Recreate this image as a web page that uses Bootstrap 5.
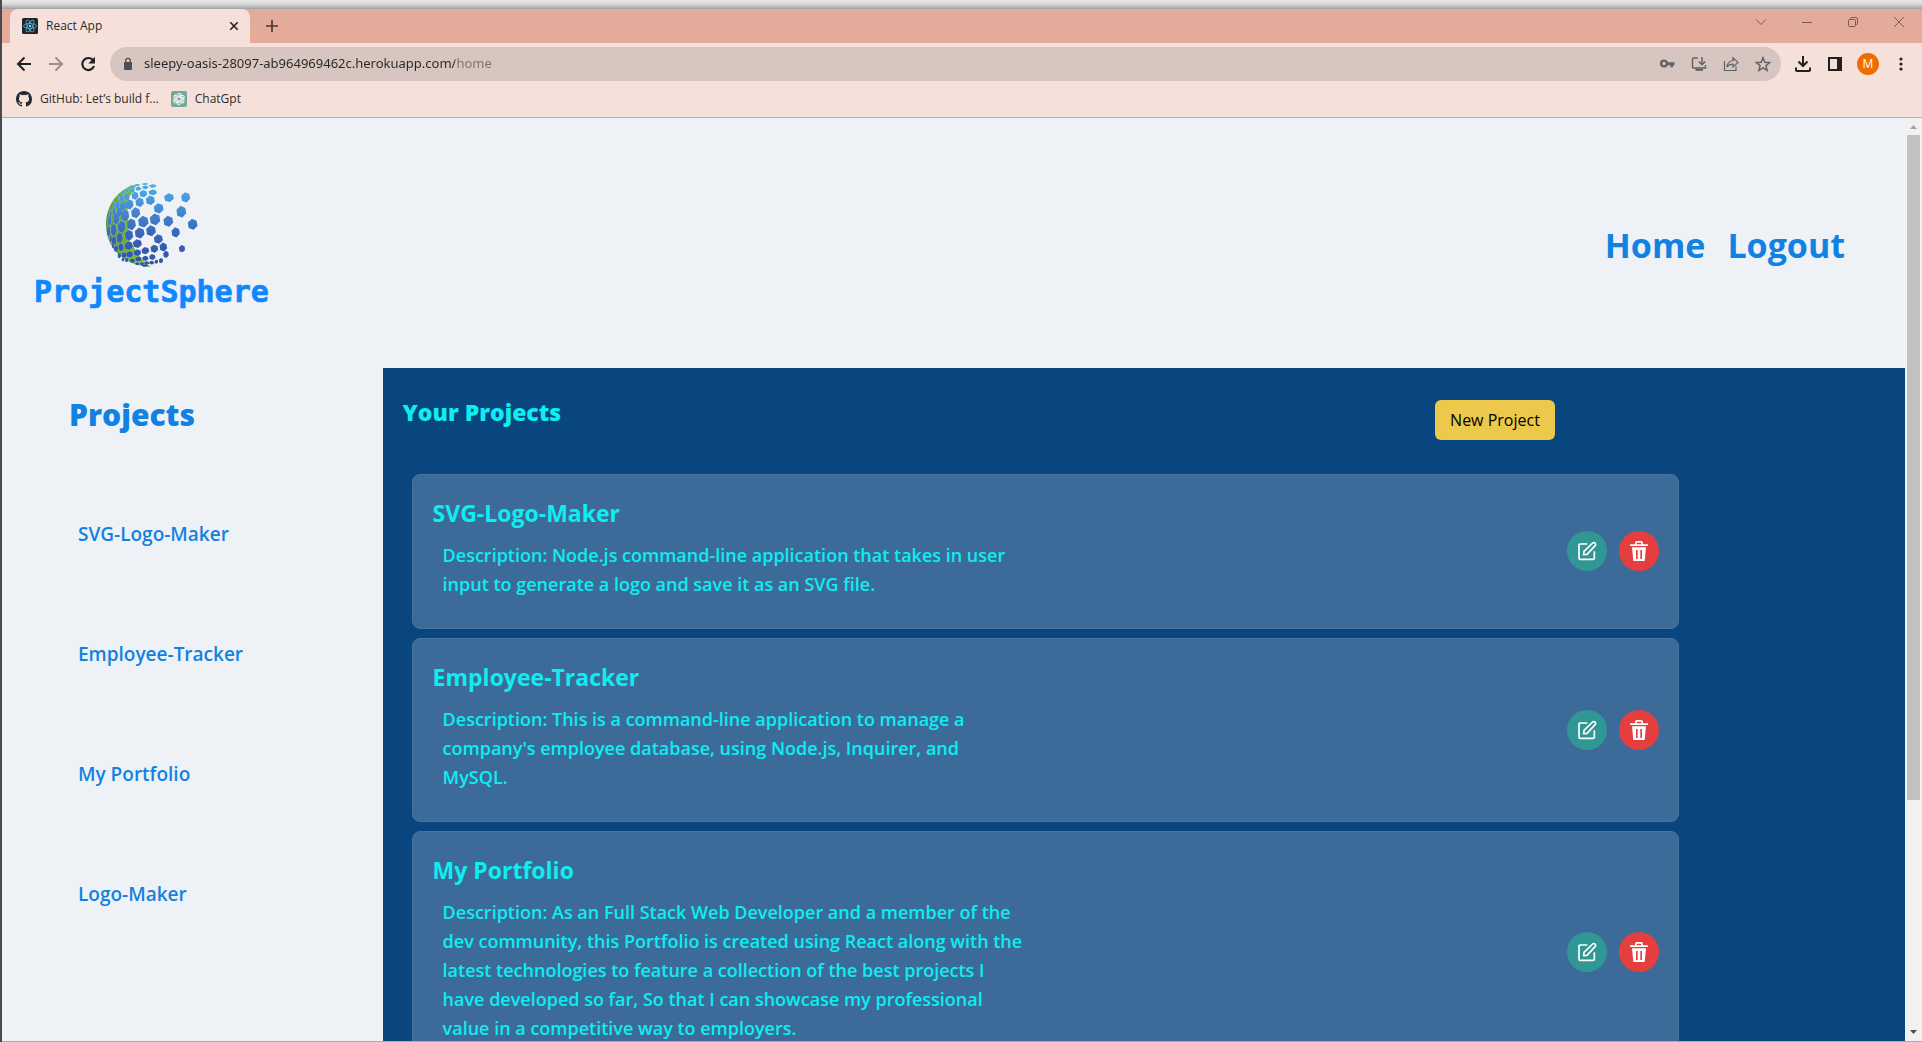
<!DOCTYPE html>
<html lang="en">
<head>
<meta charset="utf-8">
<meta name="viewport" content="width=device-width, initial-scale=1">
<title>React App</title>
<link href="https://cdn.jsdelivr.net/npm/bootstrap@5.3.0/dist/css/bootstrap.min.css" rel="stylesheet">
<style>
  body { font-family: "Open Sans", "Noto Sans", sans-serif; background: #eef2f6; border-left: 2px solid #4b4b4d; }
  button { color: inherit; }
  .win-shadow { height: 9px; background: linear-gradient(#e8e8e8, #d8d8d8 45%, #a0a0a0); }
  .tab-strip { height: 34px; background: #e3ab99; color: #7e5a4f; padding-left: 8px; }
  .browser-tab { width: 240px; background: #f5e0da; border-radius: 8px 8px 0 0; color: #2b2b2b; font-size: 12px; padding: 0 10px 0 12px; }
  .win-buttons { gap: 30px; padding-right: 15px; margin-bottom: 8px; }
  .plain-btn { background: none; border: 0; padding: 0; display: flex; }
  .tool-bar { height: 42px; background: #f5e0da; color: #202124; padding: 4px 11px 4px 12px; }
  .tool-icons { gap: 12px; }
  .address { background: #d7c6c0; border-radius: 17px; height: 34px; padding: 0 8px 0 10px; color: #5f6368; margin: 0 12px; }
  .address input { border: 0; outline: 0; font-family: "Noto Sans", sans-serif; font-size: 13px; margin-left: 8px; padding: 0; min-width: 0; color: transparent;
    background: linear-gradient(90deg, #26272a 311px, #77706e 311px); -webkit-background-clip: text; background-clip: text; }
  .address-actions { gap: 12px; }
  .avatar-dot { width: 22px; height: 22px; background: #ef6c00; color: #fff; font-size: 12px; }
  .bookmark-bar { height: 33px; background: #f5e0da; border-bottom: 1px solid #bdb0ac; font-size: 12px; padding: 0 14px 5px; gap: 12px; }
  .bookmark-bar a { color: #2f2c2b; text-decoration: none; gap: 8px; }
  .site-header { height: 250px; padding: 4px 60px 0 18px; }
  .site-nav { gap: 22px; }
  .site-nav a { font-size: 34px; font-weight: 700; color: #1282e2; text-decoration: none; }
  .side-col { flex: 0 0 20%; padding: 22px 24px 0 67px; }
  .side-col h2 { font-size: 30px; line-height: 50px; font-weight: 800; color: #1282e2; margin-bottom: 80px; }
  .side-col nav { gap: 92px; padding-left: 9px; }
  .side-col nav a { font-size: 19px; line-height: 28px; font-weight: 600; color: #1282e2; text-decoration: none; }
  .main-col { background: #09467f; color: #0ceef0; padding-top: 26px; min-width: 0; }
  .title-row { width: 77%; padding-left: 20px; margin-bottom: 34px; }
  .title-row h2 { font-size: 23px; line-height: 36px; font-weight: 800; }
  .new-btn { background: #ecc94b; color: #000; font-weight: 500; font-size: 16px; line-height: 24px; padding: 8px 15px; border-radius: 6px; border: 0; margin-top: 6px; }
  .project-list { width: 83.25%; margin-left: 29px; gap: 9px; }
  .project-card { background: #3c6b99; border: 1px solid #47749f; border-radius: 8px; padding: 20px 19px 29px 20px; }
  .project-card h3 { font-size: 23px; line-height: 36px; font-weight: 700; margin-bottom: 10px; }
  .project-card p { font-size: 18px; line-height: 29px; font-weight: 600; max-width: 584px; margin: 0 0 0 10px; }
  .card-actions { gap: 12px; margin-top: 8px; }
  .round-btn { width: 40px; height: 40px; border: 0; border-radius: 50%; color: #fff; }
  .edit-btn { background: #319795; }
  .del-btn { background: #e53e3e; }
  .scroll-track { width: 17px; background: #f1f1f1; padding: 0 2px; }
  .scroll-thumb { height: 72%; background: #c1c1c1; }
  .window-foot { height: 1px; background: #a9adb1; }
</style>
</head>
<body class="d-flex flex-column vh-100 overflow-hidden">
<div class="win-shadow flex-shrink-0"></div>
<div class="tab-strip d-flex align-items-stretch flex-shrink-0">
  <div class="browser-tab d-flex align-items-center">
    <svg width="16" height="16" viewBox="0 0 16 16"><rect width="16" height="16" rx="1.500" fill="#20232a"/><g fill="none" stroke="#4fa9c0" stroke-width=".9"><ellipse cx="8" cy="8" rx="6.500" ry="2.500"/><ellipse cx="8" cy="8" rx="6.500" ry="2.500" transform="rotate(60 8 8)"/><ellipse cx="8" cy="8" rx="6.500" ry="2.500" transform="rotate(120 8 8)"/></g><circle cx="8" cy="8" r="1.300" fill="#61dafb"/></svg>
    <span class="ms-2 flex-grow-1">React App</span>
    <button class="plain-btn" aria-label="Close tab"><svg width="12" height="12" viewBox="0 0 12 12"><path d="M2.300 2.300l7.400 7.400M9.700 2.300L2.300 9.700" stroke="#222" stroke-width="1.600"/></svg></button>
  </div>
  <button class="plain-btn align-items-center ms-3" aria-label="New tab"><svg width="12" height="12" viewBox="0 0 12 12"><path d="M6 0v12M0 6h12" stroke="#4a3a36" stroke-width="1.700"/></svg></button>
  <div class="win-buttons d-flex align-items-center ms-auto">
    <button class="plain-btn" aria-label="Search tabs"><svg width="16" height="14" viewBox="0 0 16 14" fill="none" stroke="currentColor"><path d="M3 4.500l5 5 5-5"/></svg></button>
    <button class="plain-btn" aria-label="Minimize"><svg width="16" height="14" viewBox="0 0 16 14" stroke="currentColor"><path d="M3 7.500h10"/></svg></button>
    <button class="plain-btn" aria-label="Restore"><svg width="16" height="14" viewBox="0 0 16 14" fill="none" stroke="currentColor"><rect x="3.500" y="4.500" width="7" height="7" rx="1"/><path d="M5.500 4.500V3.500q0-1 1-1h4.500q1.500 0 1.500 1.500v4.500q0 1-1 1h-1"/></svg></button>
    <button class="plain-btn" aria-label="Close"><svg width="16" height="14" viewBox="0 0 16 14" stroke="currentColor"><path d="M3 2l10 10M13 2L3 12"/></svg></button>
  </div>
</div>
<div class="tool-bar d-flex align-items-center flex-shrink-0">
  <div class="tool-icons d-flex">
    <button class="plain-btn" aria-label="Back"><svg width="20" height="20" viewBox="0 0 20 20" fill="none" stroke="#202124" stroke-width="2"><path d="M17 10H4M10.500 3.500L4 10l6.500 6.500"/></svg></button>
    <button class="plain-btn" aria-label="Forward"><svg width="20" height="20" viewBox="0 0 20 20" fill="none" stroke="#9b8e8b" stroke-width="2"><path d="M3 10h13M9.500 3.500L16 10l-6.500 6.500"/></svg></button>
    <button class="plain-btn" aria-label="Reload"><svg width="20" height="20" viewBox="0 0 20 20"><path d="M15.200 6.500A6 6 0 1 0 16 12" fill="none" stroke="#202124" stroke-width="2.200"/><path d="M17 2.800v6.700h-6.700z" fill="#202124"/></svg></button>
  </div>
  <div class="address d-flex align-items-center flex-grow-1">
    <svg width="16" height="16" viewBox="0 0 16 16"><rect x="4" y="6" width="8" height="8" rx="1" fill="#4c4f55"/><path d="M5.700 6.500V4.700a2.300 2.300 0 0 1 4.600 0v1.800" fill="none" stroke="#4c4f55" stroke-width="1.300"/></svg>
    <input class="flex-grow-1" type="text" aria-label="Address" value="sleepy-oasis-28097-ab964969462c.herokuapp.com/home">
    <div class="address-actions d-flex">
      <button class="plain-btn" aria-label="Passwords"><svg width="20" height="20" viewBox="0 0 20 20"><circle cx="7" cy="9.500" r="2.900" fill="none" stroke="#5f6368" stroke-width="2.400"/><path d="M10 8.300h7.500v3h-1.300v2h-2.700v-2H10z" fill="#5f6368"/></svg></button>
      <button class="plain-btn" aria-label="Install app"><svg width="20" height="20" viewBox="0 0 20 20" fill="none" stroke="#5f6368" stroke-width="1.500"><path d="M9 4H4.500q-1 0-1 1v8q0 1 1 1h12V11M13 3v7M9.800 7.500l3.200 3.200 3.200-3.200"/><path d="M6.500 15.800h7.500" stroke-width="2"/></svg></button>
      <button class="plain-btn" aria-label="Share"><svg width="20" height="20" viewBox="0 0 20 20" fill="none" stroke="#5f6368" stroke-width="1.200"><path d="M3.500 7v9.500h11.500v-4"/><path d="M12 3.800l5 4.600-5 4.600v-2.800c-3 0-4.800.8-6.200 2.800.5-3.600 2.500-6 6.200-6.500z"/></svg></button>
      <button class="plain-btn" aria-label="Bookmark this page"><svg width="20" height="20" viewBox="0 0 20 20" fill="none" stroke="#5f6368" stroke-width="1.500"><path d="M10 3.800l1.800 4.500 4.800.3-3.700 3.100 1.200 4.700-4.100-2.600-4.100 2.600 1.200-4.700-3.700-3.100 4.800-.3z"/></svg></button>
    </div>
  </div>
  <div class="tool-icons d-flex align-items-center">
    <button class="plain-btn" aria-label="Downloads"><svg width="20" height="20" viewBox="0 0 20 20" fill="none" stroke="#202124" stroke-width="2"><path d="M10 2v9.500M5.500 7.500L10 12l4.500-4.500M3 13.500V16q0 1 1 1h12q1 0 1-1v-2.500"/></svg></button>
    <button class="plain-btn" aria-label="Side panel"><svg width="20" height="20" viewBox="0 0 20 20"><rect x="4" y="4" width="12" height="12" fill="none" stroke="#202124" stroke-width="2"/><path d="M12 4h4v12h-4z" fill="#202124"/></svg></button>
    <button class="plain-btn avatar-dot rounded-circle align-items-center justify-content-center">M</button>
    <button class="plain-btn" aria-label="Menu"><svg width="20" height="20" viewBox="0 0 20 20" fill="#202124"><circle cx="10" cy="5" r="1.600"/><circle cx="10" cy="10" r="1.600"/><circle cx="10" cy="15" r="1.600"/></svg></button>
  </div>
</div>
<div class="bookmark-bar d-flex align-items-center flex-shrink-0">
  <a class="d-flex align-items-center" href="#"><svg width="16" height="16" viewBox="0 0 16 16"><path fill="#24292f" d="M8 0C3.580 0 0 3.580 0 8c0 3.540 2.290 6.530 5.470 7.590.4.070.55-.17.55-.38 0-.19-.01-.82-.01-1.490-2.010.37-2.530-.49-2.690-.94-.09-.23-.48-.94-.82-1.130-.28-.15-.68-.52-.01-.53.63-.01 1.080.58 1.230.82.72 1.210 1.870.87 2.330.66.07-.52.28-.87.51-1.070-1.780-.2-3.640-.89-3.640-3.950 0-.87.31-1.590.82-2.150-.08-.2-.36-1.020.08-2.120 0 0 .67-.21 2.200.82a7.420 7.420 0 0 1 4 0c1.530-1.040 2.200-.82 2.200-.82.44 1.100.16 1.920.08 2.120.51.56.82 1.270.82 2.150 0 3.070-1.870 3.750-3.650 3.950.29.25.54.73.54 1.480 0 1.070-.01 1.930-.01 2.200 0 .21.15.46.55.38A8.010 8.010 0 0 0 16 8c0-4.420-3.580-8-8-8z"/></svg>GitHub: Let’s build f...</a>
  <a class="d-flex align-items-center" href="#"><svg width="16" height="16" viewBox="0 0 16 16"><rect width="16" height="16" rx="2" fill="#74aa9c"/><g fill="none" stroke="#fff" stroke-width=".9"><g id="petal"><path d="M6 8.800V4.500a2.200 2.200 0 0 1 4-1.200L6.600 5.300"/></g><use href="#petal" transform="rotate(60 8 8)"/><use href="#petal" transform="rotate(120 8 8)"/><use href="#petal" transform="rotate(180 8 8)"/><use href="#petal" transform="rotate(240 8 8)"/><use href="#petal" transform="rotate(300 8 8)"/></g></svg>ChatGpt</a>
</div>
<div class="d-flex flex-grow-1 overflow-hidden">
  <div class="flex-grow-1 d-flex flex-column overflow-hidden">
    <header class="site-header d-flex align-items-center justify-content-between flex-shrink-0">
      <svg width="270" height="170" viewBox="0 0 810 510" role="img" aria-label="ProjectSphere">
        <defs>
          <linearGradient id="cells" gradientUnits="userSpaceOnUse" x1="0" y1="70" x2="0" y2="320"><stop offset="0" stop-color="#4fb0ea"/><stop offset=".35" stop-color="#4585cf"/><stop offset=".6" stop-color="#3a66ba"/><stop offset="1" stop-color="#2f4fa8"/></linearGradient>
          <linearGradient id="rim" gradientUnits="userSpaceOnUse" x1="258" y1="0" x2="350" y2="0"><stop offset="0" stop-color="#5f9a3c"/><stop offset="1" stop-color="#72bf2a"/></linearGradient>
        </defs>
        <path d="M352 72C296 84 258 134 258 194c0 70 54 124 134 127l-28-26-34-50-8-26 6-22-6-40 6-46z" fill="url(#rim)"/>
        <path id="gaps" fill="none" stroke="#eef2f6" stroke-width="1"/>
        <path id="globe" fill="url(#cells)"/>
        <text x="42" y="427" font-family="DejaVu Sans Mono" font-weight="700" font-size="90" fill="#0f87ff" stroke="#0f87ff" stroke-width="2">ProjectSphere</text>
      </svg>
      <nav class="site-nav d-flex"><a href="#">Home</a><a href="#">Logout</a></nav>
    </header>
    <div class="d-flex flex-grow-1">
      <aside class="side-col">
        <h2>Projects</h2>
        <nav class="d-flex flex-column"><a href="#">SVG-Logo-Maker</a><a href="#">Employee-Tracker</a><a href="#">My Portfolio</a><a href="#">Logo-Maker</a></nav>
      </aside>
      <main class="main-col flex-grow-1">
        <div class="title-row d-flex justify-content-between align-items-start">
          <h2 class="mb-0">Your Projects</h2>
          <button class="new-btn">New Project</button>
        </div>
        <div class="project-list d-flex flex-column">
          <article class="project-card d-flex align-items-center justify-content-between">
            <div><h3>SVG-Logo-Maker</h3><p>Description: Node.js command-line application that takes in user input to generate a logo and save it as an SVG file.</p></div>
            <div class="d-flex card-actions"></div>
          </article>
          <article class="project-card d-flex align-items-center justify-content-between">
            <div><h3>Employee-Tracker</h3><p>Description: This is a command-line application to manage a company's employee database, using Node.js, Inquirer, and MySQL.</p></div>
            <div class="d-flex card-actions"></div>
          </article>
          <article class="project-card d-flex align-items-center justify-content-between">
            <div><h3>My Portfolio</h3><p>Description: As an Full Stack Web Developer and a member of the dev community, this Portfolio is created using React along with the latest technologies to feature a collection of the best projects I have developed so far, So that I can showcase my professional value in a competitive way to employers.</p></div>
            <div class="d-flex card-actions"></div>
          </article>
        </div>
      </main>
    </div>
  </div>
  <div class="scroll-track d-flex flex-column flex-shrink-0">
    <svg width="13" height="17" viewBox="0 0 13 17"><path d="M3 11h7L6.500 7z" fill="#a3a3a3"/></svg>
    <div class="scroll-thumb"></div>
    <svg class="mt-auto" width="13" height="17" viewBox="0 0 13 17"><path d="M3 6h7l-3.500 4z" fill="#505050"/></svg>
  </div>
</div>
<div class="window-foot flex-shrink-0"></div>

<template id="actions">
  <button class="round-btn edit-btn d-flex align-items-center justify-content-center" aria-label="Edit project"><svg width="20" height="20" viewBox="0 0 60 60" fill="none" stroke="#fff" stroke-width="5" stroke-linejoin="round"><path d="M31 9H9q-3 0-3 3v40q0 3 3 3h40q3 0 3-3V31"/><path d="M20 41l1-10L47 6q4-3 7 0t1 7L30 40z"/></svg></button>
  <button class="round-btn del-btn d-flex align-items-center justify-content-center" aria-label="Delete project"><svg width="20" height="20" viewBox="0 0 60 60"><path fill="#fff" d="M3 10h15q0-10 5-10h14q5 0 5 10h15v5H3zM23 10h14V5H23z" fill-rule="evenodd"/><path fill="#fff" fill-rule="evenodd" d="M9 19h42l-4 41H13zM21 27v27h5V27zM34 27v27h5V27z"/></svg></button>
</template>
<script src="https://cdn.jsdelivr.net/npm/bootstrap@5.3.0/dist/js/bootstrap.bundle.min.js"></script>
<script>
  document.querySelectorAll('.card-actions').forEach(function (slot) {
    slot.append(document.getElementById('actions').content.cloneNode(true));
  });
  // Globe cells: centre x, centre y, half width, half height
  var cells = [
    [375,72,9,3],[398,78,10,5],[352,75,8,3],[335,80,7,4],[376,82,9,5],[355,86,8,6],[398,97,12,8],[370,101,11,10],[345,107,10,11],[391,121,13,13],[359,127,12,13],
    [337,91,7,7],[321,92,5,6],[308,98,4,6],[320,110,8,10],[305,115,6,9],[294,112,3,7],[328,133,12,14],[309,138,9,13],[293,134,6,11],[283,133,3,9],[347,158,13,15],[315,166,12,16],
    [298,155,8,13],[282,154,5,12],[272,160,3,11],[334,193,13,16],[305,200,11,17],[289,176,9,16],[269,182,5,14],[281,209,8,17],[266,214,5,15],[327,226,12,15],[299,233,9,15],[282,241,7,12],[272,236,3,11],
    [352,251,13,12],[326,257,12,12],[303,262,8,11],[288,266,6,9],[279,257,3,8],[376,272,11,10],[352,278,11,9],[329,283,10,9],[312,285,7,8],[298,287,5,7],[397,291,9,8],[376,295,9,7],[355,297,9,7],[337,302,8,6],[320,300,5,6],[309,299,4,5],
    [395,308,7,5],[380,309,7,5],[366,311,6,4],[352,311,6,4],[375,317,9,3],[409,305,5,6],[423,302,6,7],
    [370,185,15,16],[359,219,14,15],[393,212,14,15],[405,178,15,16],[416,145,14,14],[445,184,14,15],[415,237,13,13],[403,266,11,11],[430,261,11,12],[438,283,8,10],
    [447,113,14,12],[497,112,13,14],[484,155,14,16],[518,193,14,15],[467,217,12,14],[486,266,9,10]
  ];
  var d = cells.map(function (c) {
    var pts = [[-.15,-1.1],[.85,-.7],[1.05,.3],[.2,1.1],[-.85,.75],[-1.05,-.35]].map(function (p) {
      return (c[0] + p[0] * c[2]).toFixed(1) + ' ' + (c[1] + p[1] * c[3]).toFixed(1);
    });
    return 'M' + pts.join('L') + 'z';
  }).join('');
  document.getElementById('globe').setAttribute('d', d);
  document.getElementById('gaps').setAttribute('d', d);
</script>
</body>
</html>
